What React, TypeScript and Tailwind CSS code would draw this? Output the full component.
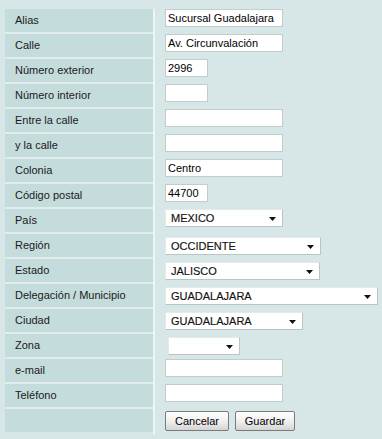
import React from "react";

type Row = {
  label: string;
  kind: "input" | "select" | "buttons";
  value?: string;
  w?: number;
};

const rows: Row[] = [
  { label: "Alias", kind: "input", value: "Sucursal Guadalajara", w: 118 },
  { label: "Calle", kind: "input", value: "Av. Circunvalación", w: 118 },
  { label: "Número exterior", kind: "input", value: "2996", w: 43 },
  { label: "Número interior", kind: "input", value: "", w: 43 },
  { label: "Entre la calle", kind: "input", value: "", w: 118 },
  { label: "y la calle", kind: "input", value: "", w: 118 },
  { label: "Colonia", kind: "input", value: "Centro", w: 118 },
  { label: "Código postal", kind: "input", value: "44700", w: 43 },
  { label: "País", kind: "select", value: "MEXICO", w: 118 },
  { label: "Región", kind: "select", value: "OCCIDENTE", w: 156 },
  { label: "Estado", kind: "select", value: "JALISCO", w: 155 },
  { label: "Delegación / Municipio", kind: "select", value: "GUADALAJARA", w: 213 },
  { label: "Ciudad", kind: "select", value: "GUADALAJARA", w: 138 },
  { label: "Zona", kind: "select", value: "", w: 73 },
  { label: "e-mail", kind: "input", value: "", w: 118 },
  { label: "Teléfono", kind: "input", value: "", w: 118 },
  { label: "", kind: "buttons" },
];

const TextBox = ({ value, w }: { value: string; w: number }) => (
  <div
    className="h-[18px] bg-white border border-[#c3cccc] px-[2px] text-[11px] leading-[16px] text-black whitespace-nowrap overflow-hidden"
    style={{ width: w }}
  >
    {value}
  </div>
);

const SelectBox = ({ value, w, first, zona }: { value: string; w: number; first: boolean; zona: boolean }) => (
  <div
    className={`h-[18px] bg-white border border-[#e4eaea] border-r-[#b9c4c4] border-b-[#b9c4c4] flex items-center justify-between pl-[5px] pr-[6px] ${
      first ? "" : "mt-[3px]"
    } ${zona ? "ml-[3px]" : ""}`}
    style={{ width: zona ? w - 1 : w }}
  >
    <span className="text-[11px] text-[#111] [-webkit-text-stroke:0.15px_#111]">{value}</span>
    <svg width="7" height="4" viewBox="0 0 7 4" className="mt-[2px]">
      <path d="M0 0h7L3.5 4z" fill="#111" />
    </svg>
  </div>
);

const Btn = ({ children, w }: { children: React.ReactNode; w: number }) => (
  <button
    className="h-[20px] rounded-[2px] border border-[#7a7a7a] bg-gradient-to-b from-white via-[#f0f0f0] to-[#d4d4d4] text-[11px] text-black leading-none"
    style={{ width: w }}
  >
    {children}
  </button>
);

export default function App() {
  return (
    <div className="w-[382px] h-[439px] bg-[#d7e6e6] pt-[9px] pl-[5px] overflow-hidden font-['Liberation_Sans',Arial,sans-serif]">
      <div className="flex flex-col">
        {rows.map((r, i) => (
          <div key={i} className="flex h-[25px]">
            <div className={`w-[148px] h-[25px] flex flex-col ${i < rows.length - 1 ? "bg-[#e1ecec]" : ""}`}>
              <div className="h-[23px] bg-[#c5dcdc] pl-[10px] flex items-center text-[11px] text-[#1a1a1a]">
                {r.label}
              </div>
            </div>
            <div className="w-[2px] h-[25px] bg-[#eef5f5]" />
            <div className="pl-[10px] flex-1">
              {r.kind === "input" && <TextBox value={r.value || ""} w={r.w || 118} />}
              {r.kind === "select" && (
                <SelectBox value={r.value || ""} w={r.w || 118} first={r.label === "País"} zona={r.label === "Zona"} />
              )}
              {r.kind === "buttons" && (
                <div className="flex gap-[6px] mt-[2px]">
                  <Btn w={64}>Cancelar</Btn>
                  <Btn w={60}>Guardar</Btn>
                </div>
              )}
            </div>
          </div>
        ))}
      </div>
    </div>
  );
}
